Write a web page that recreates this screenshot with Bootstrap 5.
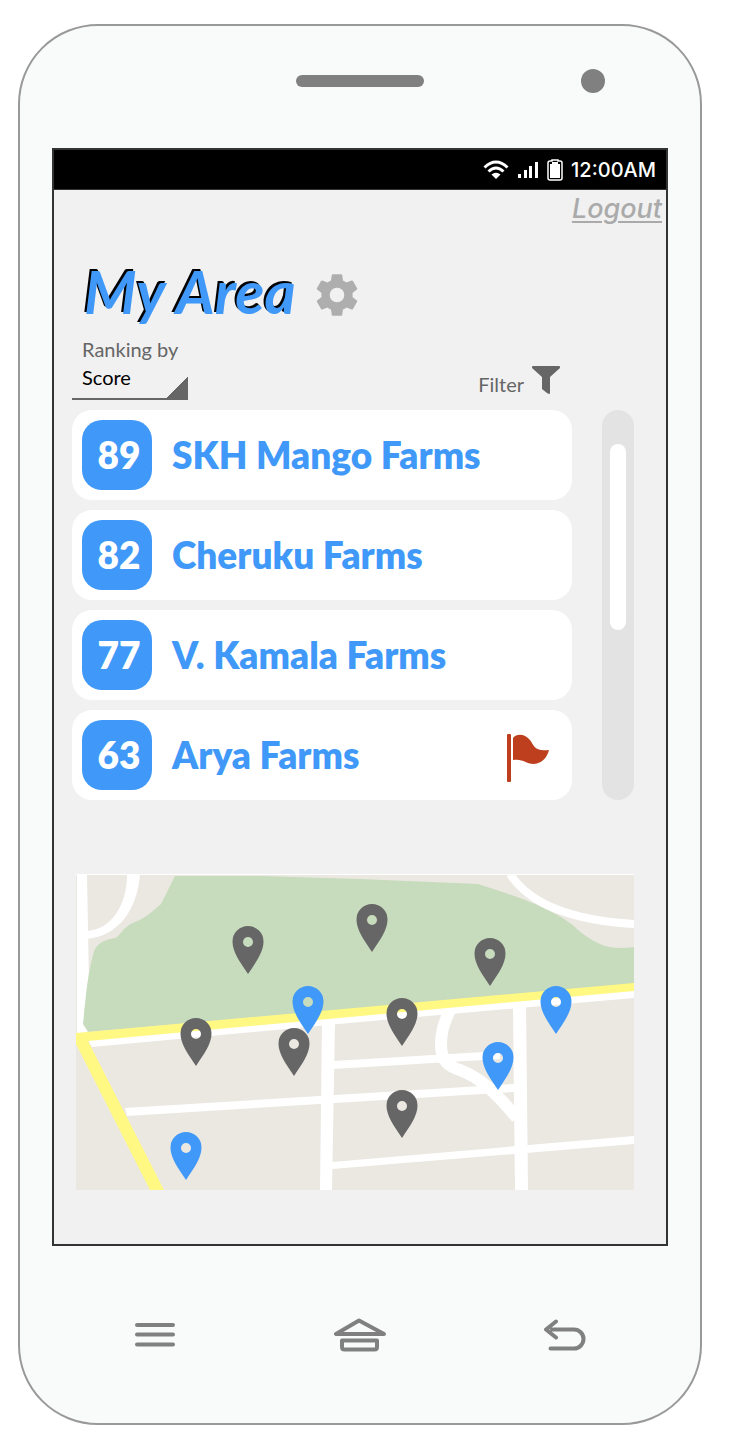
<!DOCTYPE html>
<html lang="en">
<head>
<meta charset="utf-8">
<meta name="viewport" content="width=device-width, initial-scale=1">
<title>My Area</title>
<link href="https://cdn.jsdelivr.net/npm/bootstrap@5.3.0/dist/css/bootstrap.min.css" rel="stylesheet">
<style>
  :root { --brand: #4099f8; --ink: #666; --device: #808080; }
  body { background: #fff; padding: 24px 36px 24px 18px; font-family: Lato, "Open Sans", sans-serif; }
  svg { display: block; flex: none; }
  .phone { background: #f9fafa; border: 2px solid #999; border-radius: 80px; padding: 0 32px; }
  .phone-top { height: 122px; padding-bottom: 12px; }
  .speaker { width: 128px; height: 12px; border-radius: 6px; background: var(--device); }
  .camera { width: 24px; height: 24px; border-radius: 50%; background: var(--device); margin-right: 63px; }
  .phone-screen { background: #f1f1f1; border: 2px solid #333; }
  .status-bar { height: 40px; background: #000; color: #fff; border-bottom: 1px solid #333; padding-right: 10px; font: 500 20px/40px Inter, sans-serif; }
  .logout { font: italic 500 27px/38px Inter, sans-serif; color: #aaa; padding-right: 4px; text-underline-offset: 3px; text-decoration-thickness: 2px; }
  .logout:hover { color: #888; }
  .screen-body { padding: 31px 32px 54px 18px; }
  .page-title { font-size: 60px; line-height: 64px; font-weight: 700; font-style: italic; color: var(--brand); text-shadow: -2px -2px 0 #000; padding-left: 12px; }
  .plain-btn { border: 0; background: none; padding: 0; color: #aeaeae; }
  .small-text { font-size: 20px; line-height: 28px; color: var(--ink); }
  .rank-label { padding-left: 10px; margin-top: 12px; }
  .rank-wrap { width: 116px; }
  .rank-select { appearance: none; width: 100%; height: 37px; border: 0; border-bottom: 2px solid var(--ink); border-radius: 0; padding: 0 24px 8px 10px; color: #000; font-size: 20px; line-height: 28px;
    background: linear-gradient(135deg, transparent 50%, var(--ink) 50%) right bottom / 22px 22px no-repeat; }
  .filter-btn { color: var(--ink); margin-right: 74px; padding-bottom: 2px; }
  .farm-list { gap: 10px; margin-top: 10px; }
  .farm { background: #fff; border-radius: 20px; padding: 10px 22px 10px 10px; gap: 20px; color: var(--brand); font-size: 37px; line-height: 70px; font-weight: 800; }
  .score { width: 70px; height: 70px; border-radius: 20px; background: var(--brand); color: #fff; padding-left: 4px; text-align: center; }
  .track { width: 32px; border-radius: 16px; background: #e3e3e3; padding: 34px 8px 0; margin: 10px 0 0 30px; }
  .thumb { height: 186px; border-radius: 8px; background: #fff; }
  .map { margin: 74px 0 0 4px; }
  .device-nav { height: 177px; }
  .device-nav .plain-btn { color: var(--device); }
</style>
</head>
<body>
<div class="phone">
  <div class="phone-top row g-0 align-items-center">
    <div class="col-4 offset-4 d-flex justify-content-center"><div class="speaker"></div></div>
    <div class="col-4 d-flex justify-content-end"><div class="camera"></div></div>
  </div>

  <main class="phone-screen">
    <div class="status-bar d-flex align-items-center justify-content-end">
      <svg width="26" height="20" viewBox="0 0 26 20" class="me-2" aria-hidden="true">
        <g fill="none" stroke="#fff" stroke-width="3"><path d="M1.5 7.5Q13-3.500 24.500 7.500"/><path d="M5.500 11.500Q13 4.500 20.500 11.500"/></g>
        <path fill="#fff" d="M8.500 14.500Q13 11 17.500 14.500L13 19z"/>
      </svg>
      <svg width="22" height="16" viewBox="0 0 22 16" class="me-2" aria-hidden="true">
        <path fill="#fff" d="M1 12h3v4H1zM7 8h3v8H7zM12 4h3v12h-3zM18 0h3v16h-3z"/>
      </svg>
      <svg width="16" height="22" viewBox="0 0 16 22" class="me-2" aria-hidden="true">
        <path fill="none" stroke="#fff" stroke-width="1.500" d="M5 2V1h6v1h2q2 0 2 2v15q0 2-2 2H3q-2 0-2-2V4q0-2 2-2z"/>
        <path fill="#fff" d="M3 5h2V3h6v2h2v14H3z"/>
      </svg>
      <span>12:00AM</span>
    </div>
    <div class="d-flex justify-content-end"><a href="#" class="logout">Logout</a></div>

    <div class="screen-body">
      <div class="d-flex align-items-center">
        <h1 class="page-title mb-0">My Area</h1>
        <button type="button" class="plain-btn mt-2 ms-3" aria-label="Settings">
          <svg width="50" height="50" viewBox="0 0 24 24" fill="currentColor"><path d="M19.430 12.980c.04-.32.07-.64.07-.98s-.03-.66-.07-.98l2.110-1.650c.19-.15.24-.42.12-.64l-2-3.460c-.12-.22-.39-.3-.61-.22l-2.490 1c-.52-.4-1.080-.73-1.690-.98l-.38-2.650C14.460 2.180 14.250 2 14 2h-4c-.25 0-.46.18-.49.42l-.38 2.650c-.61.25-1.170.59-1.690.98l-2.490-1c-.23-.09-.49 0-.61.22l-2 3.460c-.13.22-.07.49.12.64l2.110 1.650c-.04.32-.07.65-.07.98s.03.66.07.98l-2.110 1.650c-.19.15-.24.42-.12.64l2 3.460c.12.22.39.3.61.22l2.490-1c.52.4 1.080.73 1.690.98l.38 2.650c.03.24.24.42.49.42h4c.25 0 .46-.18.49-.42l.38-2.650c.61-.25 1.170-.59 1.690-.98l2.490 1c.23.09.49 0 .61-.22l2-3.460c.12-.22.07-.49-.12-.64zM12 15.500a3.500 3.500 0 1 1 0-7 3.500 3.500 0 0 1 0 7z"/></svg>
        </button>
      </div>

      <div class="d-flex justify-content-between align-items-end">
        <div class="rank-wrap">
          <label for="rank" class="small-text rank-label d-block text-nowrap">Ranking by</label>
          <select id="rank" class="rank-select d-block"><option>Score</option><option>Name</option></select>
        </div>
        <button type="button" class="plain-btn filter-btn small-text d-flex align-items-end">
          <span class="me-2">Filter</span>
          <svg width="28" height="28" viewBox="0 0 28 28" class="mb-1" fill="currentColor" aria-hidden="true"><path d="M1 0H27Q28 0 28 1V2L18 11V27Q18 28 17 28L15 27 10 23V11L0 2V1Q0 0 1 0Z"/></svg>
        </button>
      </div>

      <div class="d-flex">
        <ul class="farm-list list-unstyled d-flex flex-column flex-grow-1 mb-0">
          <li class="farm d-flex align-items-center"><span class="score">89</span>SKH Mango Farms</li>
          <li class="farm d-flex align-items-center"><span class="score">82</span>Cheruku Farms</li>
          <li class="farm d-flex align-items-center"><span class="score">77</span>V. Kamala Farms</li>
          <li class="farm d-flex align-items-center"><span class="score">63</span>Arya Farms
            <svg class="ms-auto mt-2" width="43" height="50" viewBox="0 0 43 50" fill="#bd3f1d" role="img" aria-label="Flagged"><rect y="0" width="4" height="48" rx="1"/><path d="M6 4C10-1 18 0 23 6 27 11 27 18 42 16 40 24 35 28 30 29.500 21 32 17 24 6 26Z"/></svg>
          </li>
        </ul>
        <div class="track"><div class="thumb"></div></div>
      </div>

      <div class="map">
        <svg class="w-100 h-auto" viewBox="76 874 558 316" role="img" aria-label="Map of farms in the area">
          <defs><path id="pin" fill-rule="evenodd" d="M0 48C-8 36-15.500 26-15.500 15.500A15.500 15.500 0 0 1 15.500 15.500C15.500 26 8 36 0 48ZM5 16A5 5 0 1 0-5 16 5 5 0 1 0 5 16Z"/></defs>
          <path fill="#ebe8e2" d="M76 874H634V1190H76z"/>
          <path fill="#fff" d="M77 874H87L89 985 90 1036H77zM76 874H634V875H76z"/>
          <path fill="#c7dbbd" d="M175 876H260L360 879 478 884C520 897 560 912 578 930 595 944 610 951 634 947V984L88 1032 83 1024C87 985 88 975 93 955 95 943 105 940 115 938 120 937 122 927 135 922 143 919 150 914 161 904Z"/>
          <g fill="#fff">
            <path d="M140 875C137 910 118 937 86 939V931C112 930 127 904 127 875z"/>
            <path d="M88 1040L634 990V998L360 1022 92 1047z"/>
            <path d="M125 1108L514 1084V1092L127 1116z"/>
            <path d="M333 1061L500 1051V1059L333 1069z"/>
            <path d="M332 1162L634 1136V1144L332 1169z"/>
            <path d="M322 1022H335L332 1190H320z"/>
            <path d="M513 1005H526L528 1190H515z"/>
          </g>
          <g fill="none" stroke="#fff">
            <path stroke-width="8" d="M510 874C530 904 570 920 634 924"/>
            <path stroke-width="12" d="M450 1010C443 1025 441 1033 441 1045 441 1062 450 1067 460 1070 478 1077 492 1088 517 1118"/>
          </g>
          <path fill="#fff882" d="M76 1033L634 983V991L88 1041 164 1190H150L76 1044z"/>
          <g fill="#666">
            <use href="#pin" x="248" y="926"/><use href="#pin" x="372" y="904"/><use href="#pin" x="490" y="938"/>
            <use href="#pin" x="402" y="998"/><use href="#pin" x="196" y="1018"/><use href="#pin" x="402" y="1090"/>
          </g>
          <g fill="#4099f8">
            <use href="#pin" x="308" y="986"/><use href="#pin" x="556" y="986"/><use href="#pin" x="498" y="1042"/><use href="#pin" x="186" y="1132"/>
          </g>
          <use href="#pin" x="294" y="1028" fill="#666"/>
        </svg>
      </div>
    </div>
  </main>

  <nav class="device-nav row g-0 align-items-center" aria-label="Device">
    <div class="col-4 d-flex justify-content-center"><button type="button" class="plain-btn" aria-label="Menu">
      <svg width="40" height="26" viewBox="0 0 40 26" fill="none" stroke="currentColor" stroke-width="4" stroke-linecap="round"><path d="M2 3H38M2 12.500H38M2 22.500H38"/></svg></button></div>
    <div class="col-4 d-flex justify-content-center"><button type="button" class="plain-btn" aria-label="Home">
      <svg width="52" height="34" viewBox="0 0 52 34" fill="none" stroke="currentColor" stroke-width="4" stroke-linejoin="round"><path d="M2 16H50L25 2.500zM8 22.500H43V29Q43 31.500 40.500 31.500H10.500Q8 31.500 8 29z"/></svg></button></div>
    <div class="col-4 d-flex justify-content-center"><button type="button" class="plain-btn" aria-label="Back">
      <svg width="42" height="32" viewBox="0 0 42 32" fill="none" stroke="currentColor" stroke-width="4" stroke-linecap="round" stroke-linejoin="round"><path d="M12 2.500L2 10.500 12 18.500M8 10.500H30A9.500 9.500 0 0 1 30 29.500H6.500"/></svg></button></div>
  </nav>
</div>
<script src="https://cdn.jsdelivr.net/npm/bootstrap@5.3.0/dist/js/bootstrap.bundle.min.js"></script>
</body>
</html>
